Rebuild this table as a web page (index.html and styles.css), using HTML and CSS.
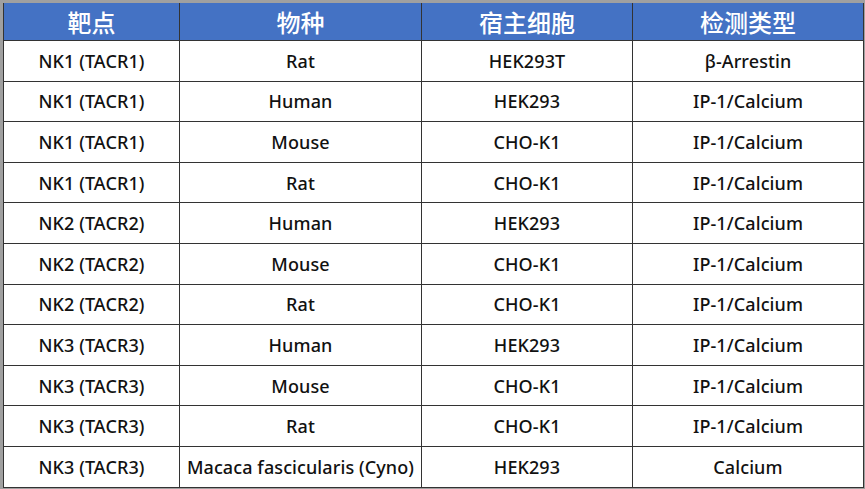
FILE: index.html
```html
<!DOCTYPE html>
<html lang="zh">
<head>
<meta charset="utf-8">
<link rel="stylesheet" href="styles.css">
</head>
<body>
<div class="sheet">
<table class="grid">
<colgroup><col class="c1"><col class="c2"><col class="c3"><col class="c4"></colgroup>
<thead>
<tr><th>靶点</th><th>物种</th><th>宿主细胞</th><th>检测类型</th></tr>
</thead>
<tbody>
<tr><td>NK1 (TACR1)</td><td>Rat</td><td>HEK293T</td><td>β-Arrestin</td></tr>
<tr><td>NK1 (TACR1)</td><td>Human</td><td>HEK293</td><td>IP-1/Calcium</td></tr>
<tr><td>NK1 (TACR1)</td><td>Mouse</td><td>CHO-K1</td><td>IP-1/Calcium</td></tr>
<tr><td>NK1 (TACR1)</td><td>Rat</td><td>CHO-K1</td><td>IP-1/Calcium</td></tr>
<tr><td>NK2 (TACR2)</td><td>Human</td><td>HEK293</td><td>IP-1/Calcium</td></tr>
<tr><td>NK2 (TACR2)</td><td>Mouse</td><td>CHO-K1</td><td>IP-1/Calcium</td></tr>
<tr><td>NK2 (TACR2)</td><td>Rat</td><td>CHO-K1</td><td>IP-1/Calcium</td></tr>
<tr><td>NK3 (TACR3)</td><td>Human</td><td>HEK293</td><td>IP-1/Calcium</td></tr>
<tr><td>NK3 (TACR3)</td><td>Mouse</td><td>CHO-K1</td><td>IP-1/Calcium</td></tr>
<tr><td>NK3 (TACR3)</td><td>Rat</td><td>CHO-K1</td><td>IP-1/Calcium</td></tr>
<tr><td>NK3 (TACR3)</td><td>Macaca fascicularis (Cyno)</td><td>HEK293</td><td>Calcium</td></tr>
</tbody>
</table>
</div>
</body>
</html>
```
FILE: styles.css
```css
html, body {
  margin: 0;
  padding: 0;
  background: #ffffff;
}
.sheet {
  width: 860px;
  border-top: 3px solid #a0a0a0;
  border-left: 3px solid #a0a0a0;
  border-right: 2px solid #a0a0a0;
  border-bottom: 2px solid #a0a0a0;
}
.grid {
  width: 860px;
  border-collapse: collapse;
  table-layout: fixed;
  font-family: "Noto Sans", "Noto Sans CJK SC", sans-serif;
}
.c1 { width: 176px; }
.c2 { width: 242px; }
.c3 { width: 211px; }
.c4 { width: 231px; }
.grid th, .grid td {
  border: 1px solid #333333;
  padding: 0;
  text-align: center;
  vertical-align: middle;
}
.grid tr:first-child th { border-top: none; }
.grid th {
  background: #4472c4;
  color: #ffffff;
  height: 37px;
  font-family: "Noto Sans CJK SC", sans-serif;
  font-size: 24px;
  line-height: 30px;
  font-weight: 500;
}
.grid td {
  height: 39.6px;
  color: #111111;
  font-size: 18px;
  font-weight: 500;
  letter-spacing: 0.1px;
}
```
